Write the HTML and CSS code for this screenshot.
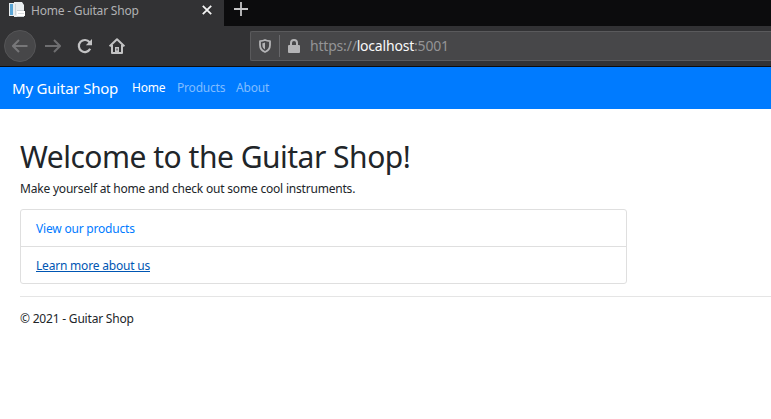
FILE: index.html
```html
<!DOCTYPE html>
<html lang="en">
<head>
<meta charset="utf-8">
<title>Home - Guitar Shop</title>
<link rel="stylesheet" href="styles.css">
</head>
<body>
<div class="tabs">
  <div class="tab">
    <svg class="favicon" width="16" height="16" viewBox="0 0 16 16"><path fill="#e9edef" d="M0 1h5v13H0zM5 0h8l2 3v12H5z"/><path fill="#5aa5d5" d="M1 2h3v11H1z"/><path fill="#cbd2d6" d="M6 2h1v11H6zM8 8h7v1H8zM8 14h7v1H8z"/><path fill="#fff" d="M8 9h8v5H8z"/><path fill="#d8dcdf" d="M9 11h6v1H9z"/></svg>
    <span class="tab-title">Home - Guitar Shop</span>
    <svg class="close" width="10" height="10" viewBox="0 0 10 10"><path d="M.8.8l8.4 8.4M9.2.8L.8 9.2" stroke="#f4f4f4" stroke-width="1.8"/></svg>
  </div>
  <svg class="plus" width="14" height="14" viewBox="0 0 14 14"><path d="M7 0v14M0 7h14" stroke="#c5c5c6" stroke-width="1.8"/></svg>
</div>
<div class="toolbar">
  <span class="back"><svg width="16" height="14" viewBox="0 0 16 14"><path d="M15.5 7H1M7 1L1 7l6 6" fill="none" stroke="#777779" stroke-width="2"/></svg></span>
  <svg class="forward" width="16" height="14" viewBox="0 0 16 14"><path d="M0 7h15M9 1l6 6-6 6" fill="none" stroke="#6e6e70" stroke-width="2"/></svg>
  <svg class="reload" width="16" height="16" viewBox="0 0 16 16"><path d="M12.6 4.3A6 6 0 1 0 13.2 10.8" fill="none" stroke="#c3c3c4" stroke-width="2.2"/><path d="M15 1v6.2H8.8z" fill="#c3c3c4"/></svg>
  <svg class="home" width="16" height="16" viewBox="0 0 16 16"><path d="M.6 8.4L8 1.2l7.4 7.2M3 7v8h10V7" fill="none" stroke="#c3c3c4" stroke-width="2" stroke-linejoin="round"/><path d="M6 9h4v6H6z" fill="#c3c3c4"/><path d="M7.5 10.5h1v2h-1z" fill="#323234"/></svg>
  <div class="url">
    <svg class="shield" width="12" height="14" viewBox="0 0 12 14"><path d="M1 2.1Q4 2 6 1q2 1 5 1.1V6q0 5-5 7-5-2-5-7z" fill="none" stroke="#b4b4b6" stroke-width="1.8" stroke-linejoin="round"/><path d="M6 3.5v7C4 9.300 3.400 8 3.400 6V4.300Q5 4.200 6 3.500z" fill="#b4b4b6"/></svg>
    <span class="divider"></span>
    <svg class="lock" width="12" height="14" viewBox="0 0 12 14"><path d="M3 7V4a3 3 0 0 1 6 0v3" fill="none" stroke="#b4b4b6" stroke-width="2"/><rect y="6" width="12" height="8" rx="1" fill="#b4b4b6"/></svg>
    <span class="address">https://<b>localhost</b>:5001</span>
  </div>
</div>
<nav class="nav">
  <a class="brand">My Guitar Shop</a>
  <a class="link link-home">Home</a>
  <a class="link link-products">Products</a>
  <a class="link link-about">About</a>
</nav>
<main class="content">
  <h1>Welcome to the Guitar Shop!</h1>
  <p class="intro">Make yourself at home and check out some cool instruments.</p>
  <ul class="list">
    <li><a class="products">View our products</a></li>
    <li><a class="about">Learn more about us</a></li>
  </ul>
  <footer><span>© 2021 - Guitar Shop</span></footer>
</main>
</body>
</html>
```
FILE: styles.css
```css
* { box-sizing: border-box; }
body { margin: 0; height: 419px; overflow: hidden; background: #fff; color: #212529; font: 12px/18px "Noto Sans", sans-serif; white-space: nowrap; }
svg { display: block; flex: none; }
.tabs { display: flex; height: 26px; background: #0c0c0d; }
.tab { display: flex; width: 224px; padding: 2px 12px 0 9px; background: #323234; color: #b1b1b3; }
.tab-title { width: 171px; margin-left: 6px; letter-spacing: -.2px; }
.close { margin-top: 3px; }
.plus { margin: 2px 0 0 10px; }
.toolbar { display: flex; align-items: center; height: 41px; padding-left: 4px; background: #323234; border-bottom: 1px solid #0c0c0d; }
.back { display: flex; align-items: center; justify-content: center; width: 32px; height: 32px; border: 1px solid #555557; border-radius: 50%; background: #474749; }
.forward { margin-left: 9px; }
.reload { margin-left: 16px; }
.home { margin-left: 16px; }
.url { display: flex; flex: 1; align-items: center; height: 30px; margin-left: 125px; padding-left: 8px; border: 1px solid #5a5a5c; border-right: 0; border-radius: 2px 0 0 2px; background: #474749; }
.divider { width: 1px; height: 22px; margin: 0 8px; background: #68686b; }
.address { margin-left: 10px; color: #949496; font-size: 14px; letter-spacing: -.2px; }
.address b { color: #f9f9fa; font-weight: 400; }
.nav { display: flex; align-items: center; height: 42px; padding-left: 12px; background: #007bff; }
.brand { width: 120px; color: #fff; font-size: 15px; letter-spacing: -.2px; }
.link { color: #80bdff; letter-spacing: -.2px; }
.link-home { width: 45px; color: #fff; }
.link-products { width: 59px; }
.content { padding: 30px 0 0 20px; }
h1 { margin: 0 0 5px; font-size: 30px; line-height: 36px; font-weight: 400; letter-spacing: -.5px; }
.intro { margin: 0 0 11px; letter-spacing: -.2px; }
.list { width: 607px; margin: 0; padding: 0; border: 1px solid #dfdfdf; border-radius: 3px; list-style: none; }
.list li { height: 36px; padding: 10px 15px 0; }
.list li + li { height: 37px; border-top: 1px solid #dfdfdf; }
.list a { color: #007bff; letter-spacing: -.2px; }
.list .about { color: #0056b3; text-decoration: underline; }
footer { margin-top: 12px; padding-top: 13px; border-top: 1px solid #e5e5e5; letter-spacing: -.2px; }
```
